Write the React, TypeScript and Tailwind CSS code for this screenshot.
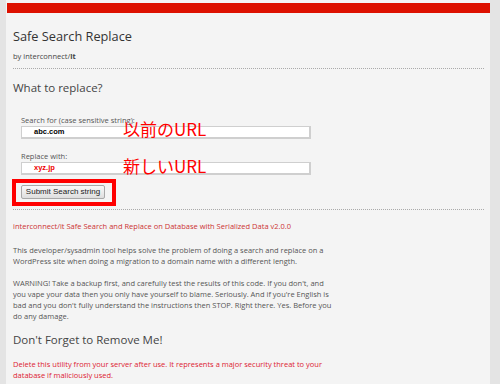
import React from "react";

const jp = { fontFamily: '"Noto Sans CJK JP", "Open Sans", sans-serif' };

const App = () => {
  return (
    <div className="w-[500px] h-[384px] overflow-hidden bg-[#e4e4e4] font-['Open_Sans',sans-serif]">
      <div className="relative ml-[6px] w-[484px] h-full bg-[#f4f4f4] pt-[3px]">
        <div className="ml-px h-[10px] bg-[#dd1100]" />
        <div className="pl-[7px] pr-[6px] text-[#555]">
          <h1 className="mt-[13px] text-[12.75px] leading-[20px] text-[#333]">Safe Search Replace</h1>
          <p className="mt-[5px] text-[7.5px] leading-[10px] text-[#444]">
            by interconnect/<b>it</b>
          </p>
          <div className="mt-[7px] border-t border-dotted border-[#aaa]" />
          <h2 className="mt-[10px] text-[11.5px] leading-[18px] text-[#444]">What to replace?</h2>

          <form className="mt-[18px] pl-[8px]">
            <label className="block text-[7.5px] leading-[10px] text-[#555]">Search for (case sensitive string):</label>
            <div className="mt-[1px] flex h-[13px] w-[290px] items-center border border-[#cfcfcf] border-b-2 border-r-2 bg-white pl-[12px] text-[7.5px] font-semibold text-black font-['Liberation_Sans',sans-serif]">
              abc.com
            </div>
            <label className="mt-[12px] block text-[7.5px] leading-[10px] text-[#555]">Replace with:</label>
            <div className="mt-[1px] flex h-[13px] w-[290px] items-center border border-[#cfcfcf] border-b-2 border-r-2 bg-white pl-[12px] text-[7.5px] font-semibold text-[#e00] font-['Liberation_Sans',sans-serif]">
              xyz.jp
            </div>
            <button
              type="button"
              className="mt-[10px] flex h-[14px] w-[84px] items-center justify-center rounded-[2px] border border-[#a8a8a8] bg-gradient-to-b from-[#fafafa] to-[#dedede] text-[8px] text-[#222] font-['Liberation_Sans',sans-serif]"
            >
              Submit Search string
            </button>
          </form>

          <div className="mt-[10px] border-t border-dotted border-[#aaa]" />

          <p className="mt-[11px] text-[7.5px] leading-[11px] text-[#cc3333]">
            interconnect/it Safe Search and Replace on Database with Serialized Data v2.0.0
          </p>
          <p className="mt-[13px] w-[325px] text-[7.5px] leading-[11px]">
            This developer/sysadmin tool helps solve the problem of doing a search and replace on a WordPress site when doing a migration to a domain name with a different length.
          </p>
          <p className="mt-[11px] w-[325px] text-[7.5px] leading-[11px]">
            WARNING! Take a backup first, and carefully test the results of this code. If you don't, and you vape your data then you only have yourself to blame. Seriously. And if you're English is bad and you don't fully understand the instructions then STOP. Right there. Yes. Before you do any damage.
          </p>
          <h2 className="mt-[9px] text-[11.5px] leading-[18px] text-[#444]">Don't Forget to Remove Me!</h2>
          <p className="mt-[10px] w-[325px] text-[7.5px] leading-[11px] text-[#dd2233]">
            Delete this utility from your server after use. It represents a major security threat to your database if maliciously used.
          </p>
        </div>

        <span style={jp} className="absolute left-[117px] top-[119px] text-[17px] leading-[20px] text-[#ff0000]">
          以前のURL
        </span>
        <span style={jp} className="absolute left-[117px] top-[156px] text-[17px] leading-[20px] text-[#ff0000]">
          新しいURL
        </span>
        <div className="absolute left-[6px] top-[179px] h-[27px] w-[104px] border-4 border-[#ff0000]" />
      </div>
    </div>
  );
};

export default App;
